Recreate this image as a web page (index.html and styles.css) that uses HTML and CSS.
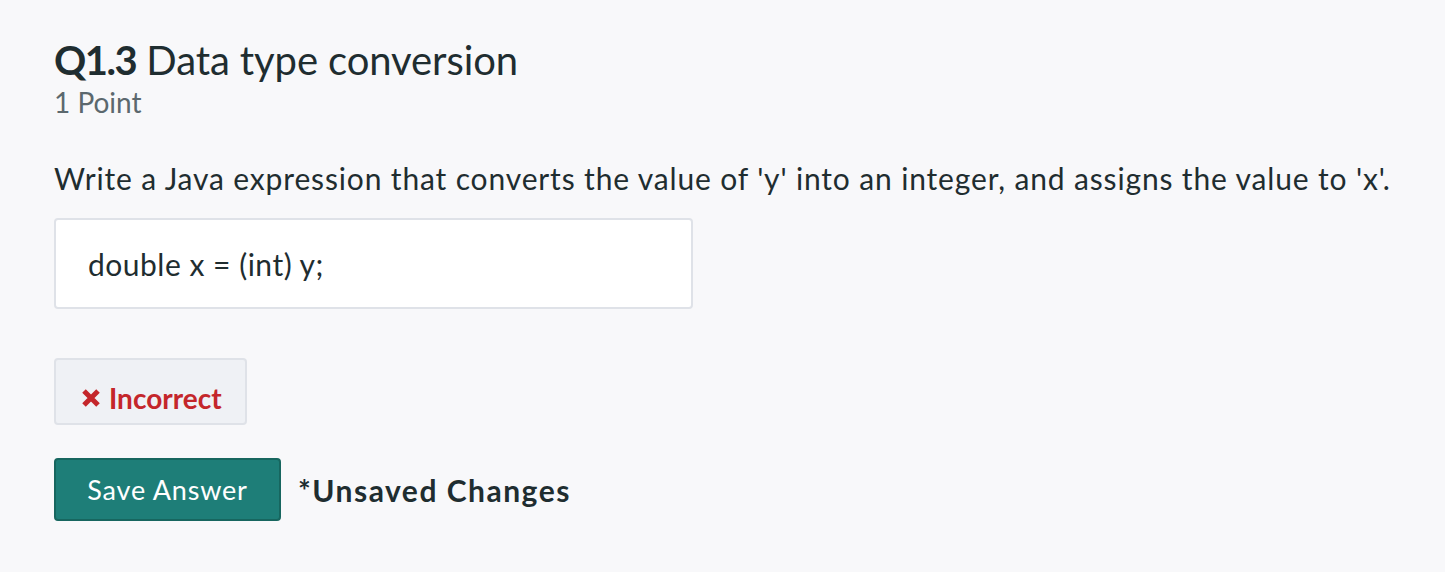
FILE: index.html
```html
<!DOCTYPE html>
<html lang="en">
<head>
<meta charset="utf-8">
<title>Q1.3 Data type conversion</title>
<link rel="stylesheet" href="styles.css">
</head>
<body>
<main class="question">
  <h1 class="title"><span class="title-num">Q1.3</span> Data type conversion</h1>
  <div class="points">1 Point</div>
  <p class="prompt">Write a Java expression that converts the value of 'y' into an integer, and assigns the value to 'x'.</p>
  <div class="answer">double x = (int) y;</div>
  <div class="feedback">
    <svg class="feedback-icon" viewBox="0 0 20 20" width="20" height="20" aria-hidden="true">
      <path d="M3 3 L17 17 M17 3 L3 17" stroke="#c4262b" stroke-width="5" stroke-linecap="butt" fill="none"/>
    </svg>
    <span>Incorrect</span>
  </div>
  <div class="actions">
    <button class="save-btn" type="button">Save Answer</button>
    <span class="unsaved">*Unsaved Changes</span>
  </div>
</main>
</body>
</html>
```
FILE: styles.css
```css
html, body {
  margin: 0;
  padding: 0;
  background: #f8f8fa;
}
body {
  font-family: "Lato", "Noto Sans", sans-serif;
  color: #1f2d30;
}
.question {
  padding: 36px 0 36px 54px;
}
.title {
  margin: 0;
  font-size: 40px;
  line-height: 48px;
  font-weight: 400;
  letter-spacing: -0.1px;
}
.title-num {
  font-weight: 700;
  letter-spacing: -1.5px;
}
.points {
  margin-top: 1px;
  font-size: 28px;
  line-height: 34px;
  color: #5c686e;
}
.prompt {
  margin: 39px 0 0;
  font-size: 30px;
  line-height: 40px;
  letter-spacing: 0.85px;
  white-space: nowrap;
}
.answer {
  margin-top: 20px;
  box-sizing: border-box;
  width: 639px;
  height: 91px;
  background: #fff;
  border: 2px solid #dfe2e8;
  border-radius: 4px;
  padding: 0 32px;
  display: flex;
  align-items: center;
  font-size: 30px;
  letter-spacing: 0.5px;
}
.feedback {
  margin-top: 49px;
  box-sizing: border-box;
  width: 193px;
  height: 67px;
  background: #eff1f5;
  border: 2px solid #dfe2e8;
  border-radius: 4px;
  padding: 12px 0 0 25px;
  display: flex;
  align-items: center;
  gap: 8px;
  color: #c4262b;
  font-weight: 700;
  font-size: 28px;
}
.feedback-icon {
  display: block;
  flex: none;
}
.actions {
  margin-top: 33px;
  display: flex;
  align-items: center;
  gap: 17px;
}
.save-btn {
  box-sizing: border-box;
  width: 227px;
  height: 63px;
  background: #1e7e78;
  border: 2px solid #17665f;
  border-radius: 4px;
  color: #fff;
  font-family: inherit;
  font-size: 27px;
  letter-spacing: 0.8px;
  padding: 0;
}
.unsaved {
  font-size: 30px;
  font-weight: 700;
  letter-spacing: 1.5px;
}
```
